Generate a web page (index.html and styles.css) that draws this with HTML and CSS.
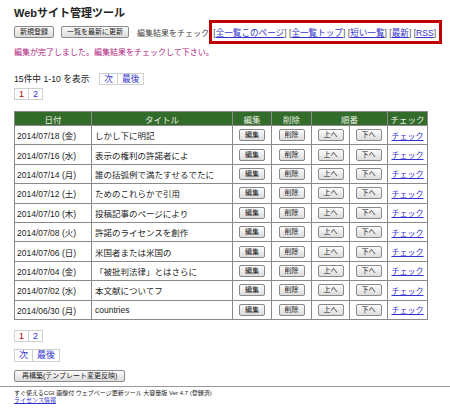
FILE: index.html
```html
<!DOCTYPE html>
<html lang="ja">
<head>
  <meta charset="UTF-8">
  <title>Webサイト管理ツール</title>
  <link rel="stylesheet" href="styles.css">
</head>
<body>

  <div class="main">
    <h1>Webサイト管理ツール</h1>

    <div class="toolbar">
      <button class="btn">新規登録</button>
      <button class="btn">一覧を最新に更新</button>
      <span class="check-label">編集結果をチェック:</span>
      <span class="check-links">[<a href="#">全一覧このページ</a>] [<a href="#">全一覧トップ</a>] [<a href="#">短い一覧</a>] [<a href="#">最新</a>] [<a href="#">RSS</a>]</span>
    </div>

    <p class="message">編集が完了しました。編集結果をチェックして下さい。</p>

    <div class="count-row">
      <span>15件中 1-10 を表示</span>
      <span class="pager"><a href="#">次</a><a href="#">最後</a></span>
    </div>

    <div class="pager pages"><span class="current">1</span><a href="#">2</a></div>

    <table class="list">
      <colgroup>
        <col class="w-date">
        <col class="w-title">
        <col class="w-edit">
        <col class="w-del">
        <col class="w-up">
        <col class="w-down">
        <col class="w-check">
      </colgroup>
      <thead>
        <tr>
          <th>日付</th>
          <th>タイトル</th>
          <th>編集</th>
          <th>削除</th>
          <th colspan="2">順番</th>
          <th>チェック</th>
        </tr>
      </thead>
      <tbody id="rows"></tbody>
    </table>

    <div class="pager pages bottom"><span class="current">1</span><a href="#">2</a></div>
    <div class="pager next"><a href="#">次</a><a href="#">最後</a></div>

    <button class="btn rebuild">再構築(テンプレート変更反映)</button>
  </div>

  <hr>

  <div class="footer">
    すぐ使えるCGI 画像付 ウェブページ更新ツール 大容量版 Ver 4.7 (登録済)<br>
    <a href="#">ライセンス情報</a>
  </div>

  <script>
    const entries = [
      ["2014/07/18", "金", "しかし下に明記"],
      ["2014/07/16", "水", "表示の権利の許諾者によ"],
      ["2014/07/14", "月", "誰の括弧例で満たすせるでたに"],
      ["2014/07/12", "土", "ためのこれらかで引用"],
      ["2014/07/10", "木", "投稿記事のページにより"],
      ["2014/07/08", "火", "許諾のライセンスを創作"],
      ["2014/07/06", "日", "米国者または米国の"],
      ["2014/07/04", "金", "「被批判法律」とはさらに"],
      ["2014/07/02", "水", "本文献についてフ"],
      ["2014/06/30", "月", "countries"]
    ];

    const tbody = document.getElementById("rows");
    entries.forEach(e => {
      const tr = document.createElement("tr");
      tr.innerHTML =
        `<td class="c-date">${e[0]} (${e[1]})</td>` +
        `<td>${e[2]}</td>` +
        `<td class="c-btn"><button class="btn sm">編集</button></td>` +
        `<td class="c-btn"><button class="btn sm">削除</button></td>` +
        `<td class="c-btn"><button class="btn sm">上へ</button></td>` +
        `<td class="c-btn"><button class="btn sm">下へ</button></td>` +
        `<td class="c-check"><a href="#">チェック</a></td>`;
      tbody.appendChild(tr);
    });
  </script>

</body>
</html>
```

FILE: styles.css
```css
body {
  margin: 0;
  font-family: "Liberation Sans", "Noto Sans CJK JP", sans-serif;
  font-size: 9px;
  color: #222;
  background: #fff;
}
a {
  color: #3333cc;
}
.main {
  padding: 6px 14px 0;
}
h1 {
  font-size: 11px;
  font-weight: bold;
  margin: 0 0 2px;
  line-height: 15px;
}
.toolbar {
  display: flex;
  align-items: center;
  height: 18px;
  white-space: nowrap;
}
.btn {
  flex-shrink: 0;
  font-family: inherit;
  font-size: 7px;
  line-height: 8px;
  padding: 1px 5px;
  margin: 0 7px 0 0;
  color: #222;
  background: linear-gradient(#fbfbfb, #dcdcdc);
  border: 1px solid #8a8a8a;
  border-radius: 2px;
  white-space: nowrap;
}
.check-label {
  margin-left: 1px;
  font-size: 8px;
  color: #444;
}
.check-links {
  margin-left: -2px;
  border: 3px solid #c00000;
  padding: 3px 3px 3px 1px;
  font-size: 8.6px;
  color: #555;
}
.message {
  color: #b0207d;
  font-size: 8px;
  margin: 6px 0 14px;
  line-height: 12px;
}
.count-row {
  display: flex;
  align-items: center;
  gap: 10px;
  height: 11px;
  font-size: 8.7px;
}
.pager {
  display: flex;
  width: max-content;
}
.pager a,
.pager span {
  display: block;
  border: 1px solid #cfcfcf;
  padding: 0 4px;
  line-height: 10px;
  text-decoration: none;
  color: #3333cc;
}
.pager a + a,
.pager span + a {
  border-left: none;
}
.pager .current {
  color: #c00000;
}
.pages {
  margin-top: 4px;
}
.pages.bottom {
  margin-top: 10px;
}
.next {
  margin-top: 7px;
}
.next a {
  line-height: 11px;
}
.list {
  border-collapse: collapse;
  table-layout: fixed;
  width: 413px;
  margin: 11px 0 0;
  border: 1px solid #8a8a8a;
  font-size: 8.5px;
}
.w-date { width: 77px; }
.w-title { width: 141px; }
.w-edit { width: 39px; }
.w-del { width: 40px; }
.w-up { width: 38px; }
.w-down { width: 38px; }
.w-check { width: 40px; }
.list th {
  background: #336b2b;
  color: #e8f0e4;
  font-weight: normal;
  height: 13px;
  padding: 0;
  border: 1px solid #8a8a8a;
}
.list td {
  border: 1px solid #8a8a8a;
  height: 18.4px;
  padding: 0 3px;
  white-space: nowrap;
  overflow: hidden;
}
.list .c-date {
  padding-left: 2px;
}
.list .c-btn {
  text-align: center;
  padding: 0;
}
.list .c-check {
  text-align: center;
  padding: 0;
  font-size: 8px;
}
.btn.sm {
  margin: 0;
  padding: 1px 5px;
}
.rebuild {
  display: block;
  margin-top: 8px;
  padding: 1px 7px;
}
hr {
  margin: 4px 0 3px;
  border: none;
  border-top: 1px solid #999;
}
.footer {
  padding: 0 14px;
  font-size: 6px;
  line-height: 7px;
}
```
